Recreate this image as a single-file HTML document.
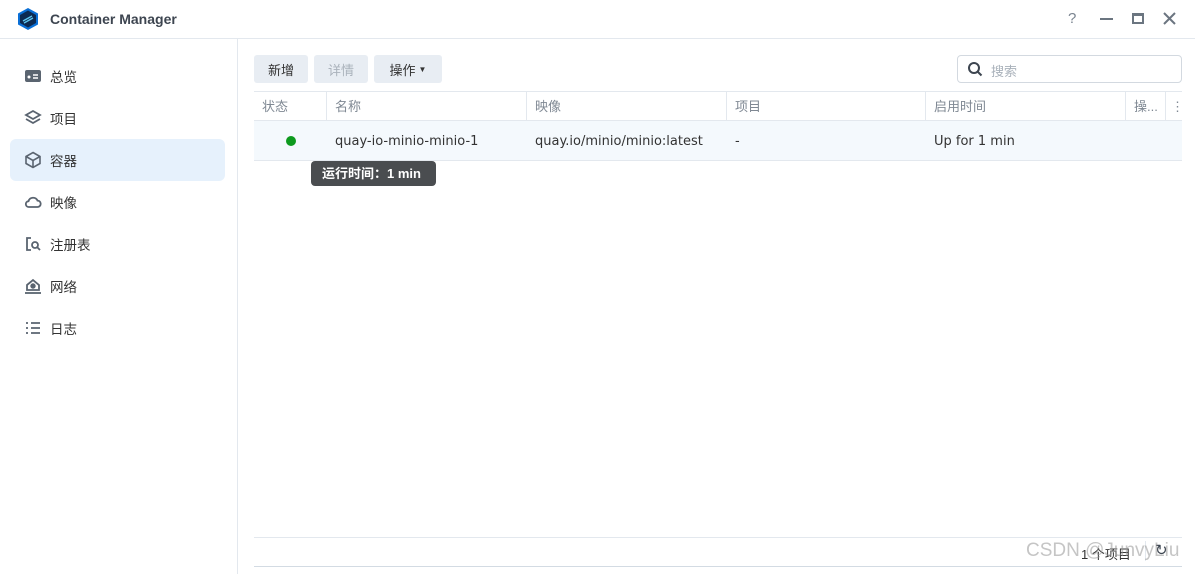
<!DOCTYPE html><html><head><meta charset="utf-8"><style>
*{box-sizing:border-box;margin:0;padding:0}
body{width:1195px;height:574px;overflow:hidden;background:#fff;font-family:"Liberation Sans","Noto Sans CJK SC",sans-serif;font-size:13px;color:#414b55;position:relative}
.abs{position:absolute}
.title{left:0;top:0;width:1195px;height:39px;border-bottom:1px solid #e3e8ee}
.side{left:0;top:39px;width:238px;height:535px;border-right:1px solid #e3e8ee}
.nav{position:absolute;left:10px;width:215px;height:42px;display:flex;align-items:center;padding-left:14px;font-size:13.5px;color:#333}
.nav svg{width:18px;height:18px;margin-right:8px}
.nav.act{background:#e6f1fc;border-radius:6px}
.btn{position:absolute;top:55px;height:28px;background:#e8edf3;border-radius:3px;font-size:13px;color:#333;display:flex;align-items:center;justify-content:center}
.th{position:absolute;top:91px;height:30px;line-height:31px;color:#7f8893;font-size:13px;padding-left:8px;border-right:1px solid #e3e8ee}
.td{position:absolute;top:121px;height:40px;line-height:42px;font-size:13px;color:#333;padding-left:8px;font-family:"DejaVu Sans","Noto Sans CJK SC",sans-serif}
</style></head><body>
<div class="abs title">
<svg class="abs" style="left:17px;top:7px" width="22" height="24" viewBox="0 0 22 24"><path d="M11 1 L21 6.5 V17.5 L11 23 L1 17.5 V6.5Z" fill="#0a6fd6"/><path d="M11 3.5 L19 8 V16 L11 20.5 L3 16 V8Z" fill="#0c2a52"/><path d="M6 14 L15 9 M7 16 L16 11" stroke="#5ec6f0" stroke-width="1.3"/></svg>
<div class="abs" style="left:50px;top:11px;font-weight:bold;font-size:14px;color:#3d4550">Container Manager</div>
<div class="abs" style="left:1068px;top:10px;font-size:15px;color:#7a8490">?</div>
<div class="abs" style="left:1100px;top:18px;width:13px;height:2px;background:#6b7580"></div>
<div class="abs" style="left:1132px;top:13px;width:12px;height:11px;border:2px solid #6b7580;border-top-width:3px"></div>
<svg class="abs" style="left:1163px;top:12px" width="13" height="13"><path d="M1 1L12 12M12 1L1 12" stroke="#6b7580" stroke-width="2"/></svg>
</div>
<div class="abs side"></div>
<div class="nav" style="top:55px"><svg viewBox="0 0 18 18"><rect x="1" y="3" width="16" height="12" rx="2" fill="#5a6470"/><circle cx="5" cy="10" r="1.5" fill="#fff"/><path d="M9 8h5M9 11h5" stroke="#fff" stroke-width="1.5"/></svg>总览</div>
<div class="nav" style="top:97px"><svg viewBox="0 0 18 18" fill="none" stroke="#5a6470" stroke-width="1.8"><path d="M9 2L16 6L9 10L2 6Z"/><path d="M2 10L9 14L16 10"/></svg>项目</div>
<div class="nav act" style="top:139px"><svg viewBox="0 0 18 18" fill="none" stroke="#5a6470" stroke-width="1.6"><path d="M9 1.5L16 5.5V12.5L9 16.5L2 12.5V5.5Z"/><path d="M2 5.5L9 9.5L16 5.5M9 9.5V16.5"/></svg>容器</div>
<div class="nav" style="top:181px"><svg viewBox="0 0 18 18" fill="none" stroke="#5a6470" stroke-width="1.8"><path d="M5 14H13.5A3.2 3.2 0 0 0 13.5 7.6A4.8 4.8 0 0 0 4.5 8.2A2.9 2.9 0 0 0 5 14Z"/></svg>映像</div>
<div class="nav" style="top:223px"><svg viewBox="0 0 18 18" fill="none" stroke="#5a6470" stroke-width="1.8"><path d="M7 3H3V15H7"/><circle cx="11" cy="10" r="3"/><path d="M13 12L16 15"/></svg>注册表</div>
<div class="nav" style="top:265px"><svg viewBox="0 0 18 18" fill="none" stroke="#5a6470" stroke-width="1.8"><path d="M3 8L9 3L15 8V13H3Z"/><circle cx="9" cy="9" r="1.8" fill="#5a6470"/><path d="M1 16H17"/></svg>网络</div>
<div class="nav" style="top:307px"><svg viewBox="0 0 18 18" stroke="#5a6470" stroke-width="1.8"><path d="M2 4H4M7 4H16M2 9H4M7 9H16M2 14H4M7 14H16"/></svg>日志</div>

<div class="btn" style="left:254px;width:54px">新增</div>
<div class="btn" style="left:314px;width:54px;color:#aab2bb">详情</div>
<div class="btn" style="left:374px;width:68px">操作 <span style="font-size:8px;margin-left:3px">▼</span></div>
<div class="abs" style="left:957px;top:55px;width:225px;height:28px;border:1px solid #d3d9e0;border-radius:4px"></div>
<svg class="abs" style="left:967px;top:61px" width="16" height="16" fill="none" stroke="#3d4550" stroke-width="2"><circle cx="7" cy="7" r="5"/><path d="M11 11L14.5 14.5"/></svg>
<div class="abs" style="left:991px;top:61px;color:#a9b1ba">搜索</div>

<div class="abs" style="left:254px;top:91px;width:928px;border-top:1px solid #e3e8ee"></div>
<div class="th" style="left:254px;width:73px">状态</div>
<div class="th" style="left:327px;width:200px">名称</div>
<div class="th" style="left:527px;width:200px">映像</div>
<div class="th" style="left:727px;width:199px">项目</div>
<div class="th" style="left:926px;width:200px">启用时间</div>
<div class="th" style="left:1126px;width:40px">操...</div>
<div class="th" style="left:1166px;width:16px;border:none;padding-left:5px">⋮</div>
<div class="abs" style="left:254px;top:120px;width:928px;height:41px;background:#f4f9fd;border-top:1px solid #e3e8ee;border-bottom:1px solid #e3e8ee"></div>
<div class="abs" style="left:286px;top:136px;width:10px;height:10px;border-radius:50%;background:#0d9a1e"></div>
<div class="td" style="left:327px">quay-io-minio-minio-1</div>
<div class="td" style="left:527px">quay.io/minio/minio:latest</div>
<div class="td" style="left:727px">-</div>
<div class="td" style="left:926px">Up for 1 min</div>
<div class="abs" style="left:311px;top:161px;width:125px;height:25px;background:#4a4d50;border-radius:4px;color:#fff;font-weight:bold;font-size:13px;line-height:25px;padding-left:11px">运行时间：1 min</div>

<div class="abs" style="left:254px;top:537px;width:928px;border-top:1px solid #e3e8ee"></div>
<div class="abs" style="left:254px;top:566px;width:928px;border-top:1px solid #d3dbe3"></div>
<div class="abs" style="left:1081px;top:544px;color:#333">1 个项目</div>
<div class="abs" style="left:1145px;top:541px;height:20px;border-left:1px solid #e3e8ee"></div>
<div class="abs" style="left:1155px;top:541px;font-size:15px;color:#3d4550">↻</div>
<div class="abs" style="left:1026px;top:540px;font-size:19px;color:rgba(150,150,150,0.55)">CSDN @JunvyLiu</div>
</body></html>
